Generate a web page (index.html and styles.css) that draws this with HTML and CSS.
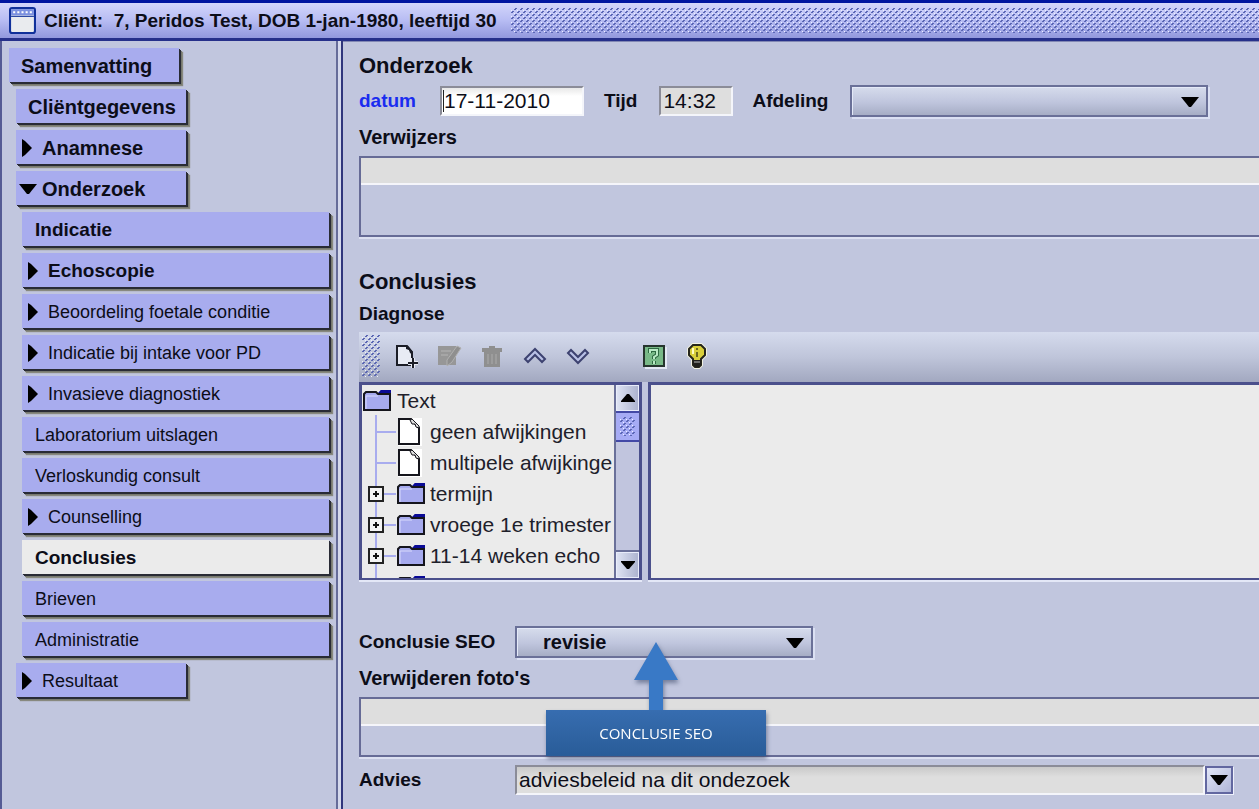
FILE: index.html
```html
<!DOCTYPE html>
<html lang="nl">
<head>
<meta charset="utf-8">
<title>Cliënt: Peridos Test</title>
<link rel="stylesheet" href="styles.css">
</head>
<body>
<svg class="defs" aria-hidden="true">
  <defs>
    <symbol id="right" viewBox="0 0 10 18"><path d="M0 0L3 2L10 9L3 16L0 18z"/></symbol>
    <symbol id="down" viewBox="0 0 18 10"><path d="M0 0H18L10 10H8z"/></symbol>
    <symbol id="folder" viewBox="0 0 30 24">
      <path d="M16 5L19 1H29V6H16z" fill="#0a0a96"/>
      <path d="M2 21V5L4 3H14L16 5H28V21z" fill="#a6aaee" stroke="#15151c" stroke-width="2"/>
      <path d="M16 4L19 1H29V4z" fill="#0a0a96"/>
      <path d="M4 20V7H16" fill="none" stroke="#d8dafb"/>
    </symbol>
    <symbol id="page" viewBox="0 0 26 28">
      <path d="M2 0H26V28H2z" fill="#fff"/>
      <path d="M3 1H15L23 10V26H3z" fill="#fff" stroke="#15151c" stroke-width="2"/>
      <path d="M14 2L16 6L19 6L20 9L23 10L23 8L16 1z" fill="#ddd" stroke="#15151c" stroke-width="1"/>
    </symbol>
    <symbol id="plus" viewBox="0 0 16 16">
      <path d="M1 1H15V15H1z" fill="#f4f4f4" stroke="#222" stroke-width="2"/>
      <path d="M5 8H11M8 5V11" stroke="#111" stroke-width="2"/>
    </symbol>
    <pattern id="dots" width="6" height="6" patternUnits="userSpaceOnUse">
      <path d="M0 4h2v1h-2zM1 3h2v1h-2zM3 1h2v1h-2zM4 0h2v1h-2z" fill="#5a66b4"/>
      <path d="M0 2h1v1h-1zM3 5h1v1h-1z" fill="#eef0ff"/>
    </pattern>
  </defs>
</svg>
<header class="titlebar">
  <svg class="window-icon" viewBox="0 0 26 26" aria-hidden="true">
    <rect x="1" y="1" width="24" height="24" rx="2" fill="#e9ebee" stroke="#10309a" stroke-width="2"/>
    <path d="M2 2H24V8H2z" fill="#7b90e0"/>
    <path d="M4 5H23" stroke="#fff" stroke-width="2" stroke-dasharray="2 2"/>
    <path d="M2 9H24" stroke="#10309a" stroke-width="1"/>
  </svg>
  <h1>Cliënt:&nbsp; 7, Peridos Test, DOB 1-jan-1980, leeftijd 30</h1>
  <svg class="grip" aria-hidden="true"><rect width="100%" height="100%" fill="url(#dots)"/></svg>
</header>
<div class="workspace">
  <nav class="sidebar">
    <button class="tab first">Samenvatting</button>
    <button class="tab wide-label">Cliëntgegevens</button>
    <button class="tab"><svg class="right"><use href="#right"/></svg>Anamnese</button>
    <button class="tab"><svg class="down"><use href="#down"/></svg>Onderzoek</button>
    <button class="tab sub">Indicatie</button>
    <button class="tab sub"><svg class="right"><use href="#right"/></svg>Echoscopie</button>
    <button class="tab sub light"><svg class="right"><use href="#right"/></svg>Beoordeling foetale conditie</button>
    <button class="tab sub light"><svg class="right"><use href="#right"/></svg>Indicatie bij intake voor PD</button>
    <button class="tab sub light"><svg class="right"><use href="#right"/></svg>Invasieve diagnostiek</button>
    <button class="tab sub light">Laboratorium uitslagen</button>
    <button class="tab sub light">Verloskundig consult</button>
    <button class="tab sub light"><svg class="right"><use href="#right"/></svg>Counselling</button>
    <button class="tab sub current" aria-current="page">Conclusies</button>
    <button class="tab sub light">Brieven</button>
    <button class="tab sub light">Administratie</button>
    <button class="tab light"><svg class="right"><use href="#right"/></svg>Resultaat</button>
  </nav>
  <main class="content">
    <h2>Onderzoek</h2>
    <div class="exam-row">
      <label class="required" for="datum">datum</label>
      <input class="date" id="datum" value="17-11-2010">
      <label for="tijd">Tijd</label>
      <input class="time" id="tijd" value="14:32">
      <label for="afdeling">Afdeling</label>
      <div class="picker department">
        <select id="afdeling"><option></option></select>
        <svg class="down"><use href="#down"/></svg>
      </div>
    </div>
    <h3>Verwijzers</h3>
    <div class="list referrers"><div class="list-head"></div></div>
    <h2 class="conclusions">Conclusies</h2>
    <h3 class="diagnosis">Diagnose</h3>
    <div class="toolbar">
      <svg class="handle" aria-hidden="true"><rect width="18" height="42" fill="url(#dots)"/></svg>
      <button aria-label="Nieuw"><svg viewBox="0 0 26 26">
        <path d="M4 3H14L19 9V22H4z" fill="#e8ebf4" stroke="#1b1d26" stroke-width="2"/>
        <path d="M13 3H15L20 9V12L17 10L16 7L13 6z" fill="#1b1d26"/>
        <path d="M15 20H25M20 15V25" stroke="#e8ebf4" stroke-width="4"/>
        <path d="M15 20H25M20 15V25" stroke="#1b1d26" stroke-width="2"/></svg></button>
      <button aria-label="Bewerken" disabled><svg viewBox="0 0 26 26">
        <path d="M2 3H20V22H2z" fill="#979797"/><path d="M5 8H15M5 12H12" stroke="#a6a6a6" stroke-width="2"/>
        <path d="M11 17L21 3L25 5L16 19L11 23z" fill="#8f8f8f" stroke="#b0b0b0"/></svg></button>
      <button aria-label="Verwijderen" disabled><svg viewBox="0 0 26 26">
        <path d="M3 5H10V3H16V5H23V9H21V24H5V9H3z" fill="#8f8f8f"/>
        <path d="M9 11V21M13 11V21M17 11V21" stroke="#9d9d9d" stroke-width="2"/></svg></button>
      <button aria-label="Omhoog"><svg viewBox="0 0 26 26">
        <path d="M3 16L13 6L23 16L20 19L13 12L6 19z" fill="#b9c1e6" stroke="#3d4270" stroke-width="2"/></svg></button>
      <button aria-label="Omlaag"><svg viewBox="0 0 26 26">
        <path d="M3 10L13 20L23 10L20 7L13 14L6 7z" fill="#b9c1e6" stroke="#3d4270" stroke-width="2"/></svg></button>
      <button class="help" aria-label="Help"><svg viewBox="0 0 26 26">
        <path d="M4 25H25V4" fill="none" stroke="#e3e8f4" stroke-width="2"/>
        <path d="M3 3H23V23H3z" fill="#78b987" stroke="#26352e" stroke-width="2"/>
        <path d="M9 10V7H16V12L13 14V16M13 18V21" fill="none" stroke="#2f6a42" stroke-width="4"/>
        <path d="M9 10V7H16V12L13 14V16M13 18V21" fill="none" stroke="#b9e9c4" stroke-width="2"/></svg></button>
      <button aria-label="Tip"><svg viewBox="0 0 26 26">
        <path d="M9 2H17L21 6V12L17 16V22L15 24H11L9 22V16L5 12V6z" fill="#d9cf3a" stroke="#f0f1e2" stroke-width="4"/>
        <path d="M9 2H17L21 6V12L17 16V22L15 24H11L9 22V16L5 12V6z" fill="#d9cf3a" stroke="#26261c" stroke-width="2"/>
        <path d="M9 17H17V21L15 24H11L9 21z" fill="#20201c"/><path d="M10 19H16" stroke="#bbb"/>
        <path d="M9 5V11" stroke="#fffcc0" stroke-width="2"/><path d="M13 5V7M13 9V14" stroke="#6e6820" stroke-width="2"/></svg></button>
    </div>
    <div class="split">
      <div class="tree-pane">
        <ul class="tree">
          <li class="root"><svg class="folder"><use href="#folder"/></svg>Text</li>
          <li class="leaf"><svg class="page"><use href="#page"/></svg>geen afwijkingen</li>
          <li class="leaf"><svg class="page"><use href="#page"/></svg>multipele afwijkinge</li>
          <li class="branch"><svg class="plus"><use href="#plus"/></svg><svg class="folder"><use href="#folder"/></svg>termijn</li>
          <li class="branch"><svg class="plus"><use href="#plus"/></svg><svg class="folder"><use href="#folder"/></svg>vroege 1e trimester</li>
          <li class="branch"><svg class="plus"><use href="#plus"/></svg><svg class="folder"><use href="#folder"/></svg>11-14 weken echo</li>
          <li class="branch"><svg class="plus"><use href="#plus"/></svg><svg class="folder"><use href="#folder"/></svg></li>
        </ul>
        <div class="scrollbar">
          <button aria-label="Omhoog schuiven"><svg viewBox="0 0 14 8"><path d="M6 0H8L14 7V8H0V7z"/></svg></button>
          <svg class="thumb" aria-hidden="true"><rect width="100%" height="100%" fill="url(#dots)"/></svg>
          <div class="track"></div>
          <button aria-label="Omlaag schuiven"><svg viewBox="0 0 14 8"><path d="M6 8H8L14 1V0H0V1z"/></svg></button>
        </div>
      </div>
      <div class="detail-pane"></div>
    </div>
    <div class="field-row seo">
      <label for="seo">Conclusie SEO</label>
      <div class="picker review">
        <select id="seo"><option>revisie</option></select>
        <svg class="down"><use href="#down"/></svg>
        <div class="callout">
          <svg viewBox="0 0 44 68"><path d="M22 0L44 38H29V68H15V38H0z" fill="#3979c6"/></svg>
          <div class="callout-label">CONCLUSIE SEO</div>
        </div>
      </div>
    </div>
    <h3>Verwijderen foto's</h3>
    <div class="list photos"><div class="list-head"></div></div>
    <div class="field-row advice">
      <label for="advies">Advies</label>
      <input id="advies" value="adviesbeleid na dit ondezoek">
      <button class="open" aria-label="Advies kiezen"><svg class="down"><use href="#down"/></svg></button>
    </div>
  </main>
</div>
</body>
</html>
```
FILE: styles.css
```css
* { box-sizing: border-box; }
body {
  margin: 0;
  min-height: 100vh;
  display: flex;
  flex-direction: column;
  overflow: hidden;
  background: #c1c6de;
  color: #0c0d18;
  font-family: "Liberation Sans", Arial, sans-serif;
  font-size: 19px;
}
h1, h2, h3, ul { margin: 0; padding: 0; }
button, input, select { font: inherit; color: inherit; margin: 0; border-radius: 0; }
svg { display: block; flex: none; }
.defs { position: absolute; width: 0; height: 0; }
.right { width: 10px; height: 18px; }
.down { width: 18px; height: 10px; }

.titlebar {
  display: flex;
  align-items: center;
  height: 41px;
  padding-left: 9px;
  border-top: 3px solid #0015a0;
  border-bottom: 3px solid #26308a;
  background: linear-gradient(#d3d6fb, #b7bcf3 50%, #9298dd);
}
.window-icon { width: 27px; height: 27px; margin-right: 8px; }
h1 { font-size: 19px; line-height: 28px; white-space: nowrap; }
.grip { flex: 1; min-width: 0; height: 25px; margin-left: 14px; }

.workspace { flex: 1; display: flex; }
.sidebar {
  flex: none;
  width: 343px;
  display: flex;
  flex-direction: column;
  align-items: flex-start;
  gap: 7px;
  padding: 7px 0 0 14px;
  border-left: 2px solid #555b94;
  border-right: 2px solid #30367c;
  background: linear-gradient(90deg, transparent 334px, #666c99 334px, #666c99 336px, #d5d9ec 336px);
}
.tab {
  display: flex;
  align-items: center;
  gap: 10px;
  width: 170px;
  height: 34px;
  padding: 1px 0 0 6px;
  border: 0;
  background: #a8acee;
  box-shadow: 1px 1px #292b35, 2px 2px #292b35, 3px 3px #77796f, 4px 4px 1px #88897f;
  font-size: 20px;
  font-weight: bold;
  line-height: 24px;
  text-align: left;
  white-space: nowrap;
}
.tab .down { margin: 0 -5px 0 -3px; }
.first { margin-left: -7px; padding-left: 12px; }
.wide-label { padding-left: 12px; }
.sub { width: 307px; margin-left: 6px; padding-left: 6px; font-size: 19px; }
.sub:not(:has(svg)) { padding-left: 13px; }
.light { font-size: 18px; font-weight: normal; }
.current { background: #ebebeb; }

.content { flex: 1; min-width: 0; padding: 10px 0 0 16px; border-top: 1px solid #8288b4; }
h2 { font-size: 22px; line-height: 28px; }
h3, label { font-size: 19px; font-weight: bold; line-height: 24px; }
h3 { font-size: 20px; }
.exam-row { display: flex; align-items: center; height: 34px; margin-top: 4px; }
.required { color: #1a2cf0; }
input {
  height: 30px;
  padding: 0 2px;
  border: 2px solid;
  border-color: #8b8c98 #f4f5fa #f4f5fa #8b8c98;
  background: #dedede;
  font-size: 21px;
}
.date {
  width: 144px;
  margin: 0 20px 0 24px;
  background:
    linear-gradient(#222, #222) 1px 2px / 1px 22px no-repeat,
    linear-gradient(#e8e8e8, #fff 8px);
}
.time { width: 74px; margin: 0 19px 0 22px; }
.picker {
  position: relative;
  height: 32px;
  border: 2px solid #6a7098;
  box-shadow: inset 1px 1px #e4e9f8, 2px 2px #dbe0f3;
  background: linear-gradient(#d6dcec, #bfc5dd 55%, #a6adc5);
}
.picker select {
  display: block;
  width: 100%;
  height: 100%;
  padding: 0 26px;
  appearance: none;
  border: 0;
  background: transparent;
  font-size: 20px;
  font-weight: bold;
}
.picker > .down { position: absolute; right: 7px; top: 10px; pointer-events: none; }
.department { width: 358px; margin-left: 22px; }
.list {
  border: 2px solid #666b96;
  border-right: 0;
  box-shadow: 0 2px #dce0f1;
}
.list-head { height: 27px; border-bottom: 2px solid #f5f5fa; background: #dedede; }
.referrers { height: 81px; margin-top: 7px; }
.exam-row + h3 { margin-top: 7px; }
.conclusions { margin-top: 31px; }
.diagnosis { margin-top: 6px; font-size: 19px; }

.toolbar {
  display: flex;
  align-items: center;
  gap: 17px;
  height: 50px;
  margin-top: 6px;
  padding: 0 0 2px 3px;
  background: linear-gradient(#d5dbed, #bfc5da 50%, #a2a8c0);
}
.toolbar button { width: 26px; height: 26px; padding: 0; border: 0; background: none; }
.toolbar button svg { width: 26px; height: 26px; }
.toolbar .handle { width: 18px; height: 42px; margin-right: -4px; }
.toolbar .help { margin-left: 33px; }

.split { display: flex; gap: 6px; height: 198px; }
.tree-pane, .detail-pane {
  border: 3px solid #4b508c;
  border-bottom-width: 2px;
  background: #ebebeb;
  box-shadow: 0 2px #e4e8f7;
}
.tree-pane { flex: none; width: 283px; display: flex; overflow: hidden; }
.detail-pane { flex: 1; border-right: 0; }
.tree {
  flex: 1;
  min-width: 0;
  overflow: hidden;
  list-style: none;
  font-size: 21px;
  color: #20202a;
  background: linear-gradient(#a8acee, #a8acee) 13px 30px / 2px 100% no-repeat;
}
.tree li { display: flex; align-items: center; height: 31px; white-space: nowrap; }
.tree .root { gap: 5px; }
.folder { width: 30px; height: 24px; }
.page { width: 26px; height: 28px; }
.plus { width: 16px; height: 16px; }
.branch { padding-left: 6px; background: linear-gradient(#a8acee, #a8acee) 22px 15px / 12px 2px no-repeat; }
.branch .folder { margin: 0 4px 0 12px; }
.leaf { padding-left: 34px; gap: 8px; background: linear-gradient(#a8acee, #a8acee) 14px 15px / 20px 2px no-repeat; }
.scrollbar {
  flex: none;
  width: 25px;
  display: flex;
  flex-direction: column;
  border-left: 2px solid #6a7099;
  background: #c1c5de;
}
.scrollbar button {
  display: grid;
  place-items: center;
  height: 26px;
  padding: 0;
  border: 1px solid #e8ecfa;
  background: linear-gradient(90deg, #dde2f2, #adb4d0);
}
.scrollbar button svg { width: 14px; height: 8px; }
.thumb { width: 100%; height: 31px; padding: 4px; border: solid #4349a6; border-width: 2px 0; background: #a6abf5; }
.track { flex: 1; border-bottom: 2px solid #6a7099; }

.field-row { display: flex; align-items: center; }
.field-row label { width: 156px; }
.seo { margin-top: 45px; height: 34px; }
.review { width: 298px; }
.callout {
  position: absolute;
  left: 29px;
  top: 14px;
  width: 220px;
  filter: drop-shadow(1px 3px 2px #33405f88);
  pointer-events: none;
}
.callout svg { width: 44px; height: 68px; margin: 0 auto; }
.callout-label {
  height: 46px;
  background: linear-gradient(#376db0, #295c98);
  color: #fff;
  font-family: "Open Sans", "Noto Sans", sans-serif;
  font-size: 15px;
  line-height: 46px;
  text-align: center;
}
.seo + h3 { margin-top: 7px; }
.photos { height: 60px; margin-top: 7px; }
.advice { height: 32px; margin-top: 7px; padding-right: 26px; }
.advice input { flex: 1; min-width: 0; background: linear-gradient(#c9c9c9, #dedede 10px); }
.open {
  display: grid;
  place-items: center;
  width: 28px;
  height: 28px;
  padding: 0;
  border: 2px solid #6267a0;
  background: linear-gradient(135deg, #e2e6f8, #b0b6d8);
  box-shadow: 1px 1px #eef0fb;
}
```
